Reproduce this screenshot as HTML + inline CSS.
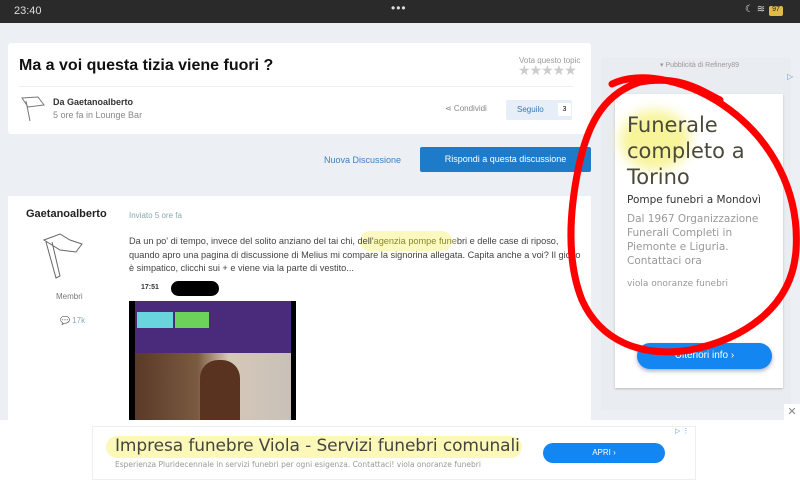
<!DOCTYPE html>
<html><head><meta charset="utf-8"><style>
*{margin:0;padding:0;box-sizing:border-box}
body{width:800px;height:480px;overflow:hidden;background:#eceff3;font-family:"Liberation Sans",sans-serif;position:relative}
.abs{position:absolute}
</style></head><body>
<div class="abs" style="left:0;top:0;width:800px;height:23px;background:#2a2a2a;color:#ddd;font-size:11px">
 <span class="abs" style="left:14px;top:5px">23:40</span>
 <span class="abs" style="left:391px;top:1px;font-size:12px;letter-spacing:1px">•••</span>
 <span class="abs" style="left:745px;top:4px;font-size:10px">☾ ≋</span>
 <span class="abs" style="left:769px;top:6px;width:14px;height:10px;background:#e0b94a;border-radius:2px;font-size:7px;color:#222;text-align:center">97</span>
</div>
<!-- topic card -->
<div class="abs" style="left:8px;top:43px;width:583px;height:91px;background:#fff;border-radius:3px"></div>
<div class="abs" style="left:19px;top:57px;font-size:16px;font-weight:bold;color:#111">Ma a voi questa tizia viene fuori ?</div>
<div class="abs" style="left:519px;top:56px;font-size:8px;color:#999">Vota questo topic</div>
<div class="abs" style="left:518px;top:62px;font-size:14px;color:#ccc;letter-spacing:-1px">★★★★★</div>
<div class="abs" style="left:18px;top:86px;width:555px;height:1px;background:#eee"></div>
<svg class="abs" style="left:18px;top:95px" width="28" height="30"><path d="M4 3 L20 2 L26 10 L10 12 Z M8 6 L12 26" stroke="#777" fill="none"/></svg>
<div class="abs" style="left:53px;top:97px;font-size:9px;font-weight:bold;color:#333">Da Gaetanoalberto</div>
<div class="abs" style="left:53px;top:110px;font-size:9px;color:#888">5 ore fa in Lounge Bar</div>
<div class="abs" style="left:445px;top:104px;font-size:8px;color:#888">⋖ Condividi</div>
<div class="abs" style="left:506px;top:100px;width:66px;height:20px;background:#e6eef7;border-radius:2px"></div>
<div class="abs" style="left:517px;top:105px;font-size:8px;color:#3c76b8">Seguilo</div>
<div class="abs" style="left:558px;top:103px;width:13px;height:13px;background:#fff;font-size:7px;text-align:center;line-height:13px">3</div>
<div class="abs" style="left:324px;top:155px;font-size:9px;color:#3d80c4">Nuova Discussione</div>
<div class="abs" style="left:420px;top:147px;width:171px;height:25px;background:#1d7bc9;border-radius:2px;color:#fff;font-size:9px;text-align:center;line-height:25px">Rispondi a questa discussione</div>
<!-- post -->
<div class="abs" style="left:8px;top:196px;width:583px;height:240px;background:#fff"></div>
<div class="abs" style="left:26px;top:208px;font-size:11px;font-weight:bold;color:#222">Gaetanoalberto</div>
<div class="abs" style="left:129px;top:211px;font-size:8px;color:#8aa">Inviato 5 ore fa</div>
<svg class="abs" style="left:38px;top:230px" width="50" height="55"><path d="M6 10 L22 4 L32 10 L44 14 L38 22 L22 20 Z M8 12 L18 48 L22 46 L14 12" stroke="#666" fill="none"/></svg>
<div class="abs" style="left:56px;top:292px;font-size:8px;color:#777">Membri</div>
<div class="abs" style="left:60px;top:316px;font-size:8px;color:#8ab">💬 17k</div>
<div class="abs" style="left:360px;top:231px;width:92px;height:20px;background:#fbf8c0;border-radius:10px"></div>
<div class="abs" style="left:129px;top:235px;font-size:9.2px;line-height:13.5px;color:#444;width:452px">Da un po' di tempo, invece del solito anziano del tai chi, dell'<span style="color:#8a8a30">agenzia pompe fune</span>bri e delle case di riposo, quando apro una pagina di discussione di Melius mi compare la signorina allegata. Capita anche a voi? Il gioco è simpatico, clicchi sui + e viene via la parte di vestito...</div>
<div class="abs" style="left:141px;top:284px;font-size:7px;font-weight:bold;color:#333">17:51</div>
<div class="abs" style="left:171px;top:281px;width:48px;height:15px;background:#000;border-radius:8px"></div>
<div class="abs" style="left:129px;top:301px;width:167px;height:119px;background:#000"></div>
<div class="abs" style="left:135px;top:301px;width:156px;height:52px;background:#4a2a7a"></div>
<div class="abs" style="left:137px;top:312px;width:36px;height:16px;background:#6ad4dc"></div>
<div class="abs" style="left:175px;top:312px;width:34px;height:16px;background:#6cd25a"></div>
<div class="abs" style="left:135px;top:353px;width:156px;height:67px;background:linear-gradient(90deg,#5a3a28 0,#7a5a40 40%,#d6c8b8 60%,#c8c0b8 100%)"></div>
<div class="abs" style="left:200px;top:360px;width:40px;height:60px;background:#5a3320;border-radius:18px 18px 0 0"></div>
<!-- right ad -->
<div class="abs" style="left:601px;top:58px;width:190px;height:352px;background:#e9ecf0"></div>
<div class="abs" style="left:660px;top:61px;font-size:7px;color:#999">▾ Pubblicità di Refinery89</div>
<div class="abs" style="left:787px;top:72px;font-size:8px;color:#4aa3f0">▷</div>
<div class="abs" style="left:615px;top:94px;width:168px;height:294px;background:#fff;box-shadow:0 1px 2px #bbb"></div>
<div class="abs" style="left:620px;top:110px;width:70px;height:60px;background:#f8f49a;border-radius:50%;filter:blur(6px)"></div>
<div class="abs" style="left:627px;top:112px;font-size:21px;line-height:26px;color:#4a4a3a;font-family:'DejaVu Sans',sans-serif;width:150px">Funerale completo a Torino</div>
<div class="abs" style="left:627px;top:194px;font-size:10.5px;color:#333;font-family:'DejaVu Sans',sans-serif">Pompe funebri a Mondovì</div>
<div class="abs" style="left:627px;top:212px;font-size:10.5px;line-height:14px;color:#999;font-family:'DejaVu Sans',sans-serif;width:150px">Dal 1967 Organizzazione Funerali Completi in Piemonte e Liguria. Contattaci ora</div>
<div class="abs" style="left:627px;top:279px;font-size:9px;color:#999;font-family:'DejaVu Sans',sans-serif">viola onoranze funebri</div>
<div class="abs" style="left:637px;top:343px;width:135px;height:26px;background:#1386f2;border-radius:13px;color:#fff;font-size:10px;text-align:center;line-height:26px;box-shadow:0 2px 4px #aac">Ulteriori info ›</div>
<!-- bottom ad -->
<div class="abs" style="left:0;top:420px;width:800px;height:60px;background:#fff"></div>
<div class="abs" style="left:92px;top:426px;width:604px;height:54px;border:1px solid #eee"></div>
<div class="abs" style="left:106px;top:436px;width:416px;height:22px;background:#fbf8b8;border-radius:11px"></div>
<div class="abs" style="left:115px;top:436px;font-size:17px;color:#444;font-family:'DejaVu Sans',sans-serif;letter-spacing:-0.1px">Impresa funebre Viola - Servizi funebri comunali</div>
<div class="abs" style="left:115px;top:460px;font-size:7.5px;color:#999;font-family:'DejaVu Sans',sans-serif">Esperienza Pluridecennale in servizi funebri per ogni esigenza. Contattaci! viola onoranze funebri</div>
<div class="abs" style="left:543px;top:443px;width:122px;height:20px;background:#1386f2;border-radius:10px;color:#fff;font-size:8px;text-align:center;line-height:20px">APRI ›</div>
<div class="abs" style="left:675px;top:427px;font-size:7px;color:#4aa3f0">▷ ⋮</div>
<div class="abs" style="left:784px;top:404px;width:16px;height:16px;background:#fff;font-size:11px;color:#888;text-align:center;line-height:16px">✕</div>
<!-- red circle -->
<svg class="abs" style="left:0;top:0" width="800" height="480"><path d="M612 84 C640 70 690 80 730 110 C770 140 800 190 796 250 C792 310 740 340 690 350 C640 358 600 340 582 300 C566 260 570 210 578 170 C586 130 600 95 640 82 C680 75 700 90 720 100" stroke="#f00" stroke-width="7" fill="none" stroke-linecap="round"/></svg>
</body></html>
